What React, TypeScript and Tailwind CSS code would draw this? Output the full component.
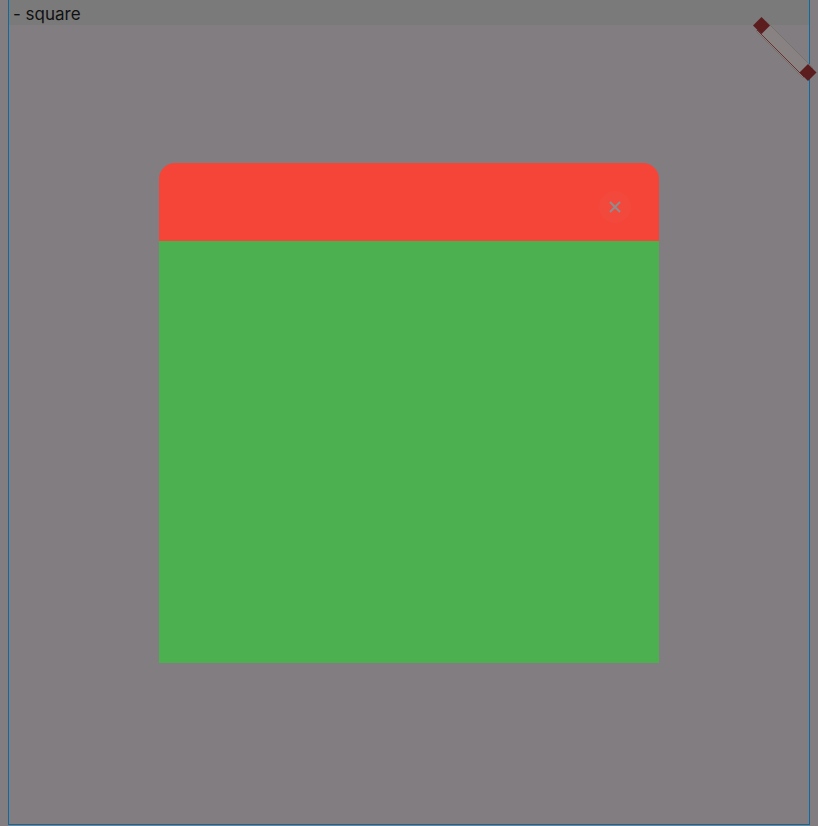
import React from 'react';

const Handle: React.FC = () => (
  <svg
    className="absolute top-0 right-0 pointer-events-none"
    width="70"
    height="90"
    viewBox="748 0 70 90"
  >
    <polygon points="766,21 813,68 803,78 756,31" fill="#888283" stroke="#77716f" strokeWidth="1" />
    <line x1="757" y1="30" x2="804" y2="77" stroke="#6a3033" strokeWidth="1" />
    <rect x="755.5" y="19.5" width="12" height="12" fill="#5c1d1f" transform="rotate(45 761.5 25.5)" />
    <rect x="802" y="66.5" width="12" height="12" fill="#5c1d1f" transform="rotate(45 808 72.5)" />
  </svg>
);

export default function App() {
  return (
    <div className="relative w-[818px] h-[826px] bg-[#827d80] overflow-hidden font-['Inter','Liberation_Sans',sans-serif]">
      <div className="ml-[8px] w-[802px] h-[825px] border-x border-b border-[#0c6aa0] flex flex-col">
        <div className="h-[25px] bg-[#7b7a7a] px-[4px] pt-[5px] text-[17px] leading-[18px] text-[#111]">
          - square
        </div>
        <div className="flex-1 flex justify-center pt-[138px]">
          <div className="w-[500px] h-[500px] flex flex-col">
            <div className="h-[78px] bg-[#f54538] rounded-t-[16px] flex items-start justify-end pr-[28px] pt-[28px]">
              <button className="w-[32px] h-[32px] rounded-full bg-[#f3493d] flex items-center justify-center text-[#8a8f8f]">
                <svg width="14" height="14" viewBox="0 0 14 14">
                  <path d="M2 2 L12 12 M12 2 L2 12" stroke="currentColor" strokeWidth="1.8" />
                </svg>
              </button>
            </div>
            <div className="flex-1 bg-[#4caf50]" />
          </div>
        </div>
      </div>
      <Handle />
    </div>
  );
}
